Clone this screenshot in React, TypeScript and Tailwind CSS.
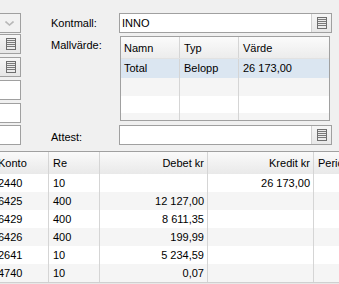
import React from "react";

const ListIcon = () => (
  <svg width="10" height="12" viewBox="0 0 10 12" className="block">
    <rect x="0.5" y="0.5" width="9" height="11" fill="#ececec" stroke="#6f6f6f" />
    <line x1="1" y1="2.5" x2="9" y2="2.5" stroke="#7a7a7a" />
    <line x1="1" y1="4.5" x2="9" y2="4.5" stroke="#7a7a7a" />
    <line x1="1" y1="6.5" x2="9" y2="6.5" stroke="#7a7a7a" />
    <line x1="1" y1="8.5" x2="9" y2="8.5" stroke="#7a7a7a" />
  </svg>
);

const Chevron = () => (
  <svg width="9" height="5" viewBox="0 0 9 5" className="block">
    <path d="M0.5 0.5 L4.5 4 L8.5 0.5" fill="none" stroke="#b8b8b8" strokeWidth="1.6" />
  </svg>
);

const LookupBox = ({ text }: { text: string }) => (
  <div className="w-[213px] h-[20px] border border-[#a0a0a0] bg-white flex">
    <div className="flex-1 pl-[2px] leading-[18px] whitespace-nowrap overflow-hidden">{text}</div>
    <div className="w-[20px] h-full border-l border-[#d0d0d0] bg-linear-to-b from-[#f6f6f6] to-[#e8e8e8] flex items-center justify-center">
      <ListIcon />
    </div>
  </div>
);

const bottomRows = [
  ["2440", "10", "", "26 173,00"],
  ["6425", "400", "12 127,00", ""],
  ["6429", "400", "8 611,35", ""],
  ["6426", "400", "199,99", ""],
  ["2641", "10", "5 234,59", ""],
  ["4740", "10", "0,07", ""],
];

export default function App() {
  return (
    <div
      className="w-[339px] h-[284px] bg-[#f0f0f0] overflow-hidden flex flex-col text-[11px] text-black"
      style={{ fontFamily: "'Liberation Sans', Arial, sans-serif" }}
    >
      {/* top form */}
      <div className="h-[151px] flex shrink-0">
        {/* left clipped column */}
        <div className="w-[21px] shrink-0 flex flex-col pt-[13px]">
          <div className="w-[40px] h-[20px] ml-[-19px] border border-[#a0a0a0] bg-[#f2f2f2] flex items-center justify-end pr-[6px]">
            <Chevron />
          </div>
          <div className="w-[40px] h-[20px] ml-[-19px] mt-[1px] border border-[#a0a0a0] bg-linear-to-b from-[#f6f6f6] to-[#e6e6e6] flex items-center justify-end pr-[4px]">
            <ListIcon />
          </div>
          <div className="w-[40px] h-[20px] ml-[-19px] mt-[3px] border border-[#a0a0a0] bg-linear-to-b from-[#f6f6f6] to-[#e6e6e6] flex items-center justify-end pr-[4px]">
            <ListIcon />
          </div>
          <div className="w-[40px] h-[20px] ml-[-19px] mt-[3px] border border-[#a0a0a0] bg-white" />
          <div className="w-[40px] h-[20px] ml-[-19px] mt-[3px] border border-[#a0a0a0] bg-white" />
          <div className="w-[40px] h-[20px] ml-[-19px] mt-[2px] border border-[#a0a0a0] bg-white" />
        </div>
        {/* labels */}
        <div className="w-[98px] shrink-0 pl-[30px] pt-[13px] flex flex-col">
          <div className="h-[20px] leading-[20px]">Kontmall:</div>
          <div className="h-[20px] leading-[20px] mt-[2px]">Mallvärde:</div>
          <div className="h-[20px] leading-[20px] mt-[72px]">Attest:</div>
        </div>
        {/* fields */}
        <div className="w-[213px] shrink-0 pt-[13px] flex flex-col">
          <LookupBox text="INNO" />
          <div className="ml-[1px] mt-[3px] w-[210px] h-[85px] border border-[#a0a0a0] bg-[#f5f5f5] flex flex-col overflow-hidden">
            <div className="h-[22px] shrink-0 flex bg-linear-to-b from-[#fbfbfb] to-[#ececec] border-b border-[#e2e2e2]">
              <div className="w-[59px] border-r border-[#d5d5d5] pl-[3px] leading-[22px]">Namn</div>
              <div className="w-[59px] border-r border-[#d5d5d5] pl-[4px] leading-[22px]">Typ</div>
              <div className="flex-1 pl-[4px] leading-[22px]">Värde</div>
            </div>
            <div className="h-[19px] shrink-0 flex bg-[#dbe6f1]">
              <div className="w-[59px] border-r border-[#d5d5d5] pl-[3px] leading-[19px]">Total</div>
              <div className="w-[59px] border-r border-[#d5d5d5] pl-[4px] leading-[19px]">Belopp</div>
              <div className="flex-1 pl-[4px] leading-[19px]">26 173,00</div>
            </div>
            <div className="h-[18px] shrink-0 flex bg-[#f5f5f5]">
              <div className="w-[59px] border-r border-[#d5d5d5]" />
              <div className="w-[59px] border-r border-[#d5d5d5]" />
              <div className="flex-1" />
            </div>
            <div className="h-[17px] shrink-0 flex bg-white">
              <div className="w-[59px] border-r border-[#d5d5d5]" />
              <div className="w-[59px] border-r border-[#d5d5d5]" />
              <div className="flex-1" />
            </div>
            <div className="flex-1 flex bg-[#f5f5f5]">
              <div className="w-[59px] border-r border-[#d5d5d5]" />
              <div className="w-[59px] border-r border-[#d5d5d5]" />
              <div className="flex-1" />
            </div>
          </div>
          <div className="mt-[4px]">
            <LookupBox text="" />
          </div>
        </div>
      </div>

      {/* bottom grid */}
      <div className="flex-1 flex flex-col ml-[-8px] w-[362px] border-t border-[#a0a0a0]">
        <div className="h-[22px] shrink-0 flex bg-linear-to-b from-[#fafafa] to-[#e9e9e9]">
          <div className="w-[57px] border-r border-[#d5d5d5] pl-[6px] leading-[22px]">Konto</div>
          <div className="w-[51px] border-r border-[#d5d5d5] pl-[4px] leading-[22px]">Re</div>
          <div className="w-[108px] border-r border-[#d5d5d5] pr-[3px] text-right leading-[22px]">Debet kr</div>
          <div className="w-[106px] border-r border-[#d5d5d5] pr-[3px] text-right leading-[22px]">Kredit kr</div>
          <div className="flex-1 pl-[4px] leading-[22px] whitespace-nowrap">Period</div>
        </div>
        {bottomRows.map((r, i) => (
          <div
            key={i}
            className={`h-[18px] shrink-0 flex ${i % 2 === 0 ? "bg-white" : "bg-[#f5f5f5]"}`}
          >
            <div className="w-[57px] border-r border-[#d5d5d5] pl-[6px] leading-[18px]">{r[0]}</div>
            <div className="w-[51px] border-r border-[#d5d5d5] pl-[4px] leading-[18px]">{r[1]}</div>
            <div className="w-[108px] border-r border-[#d5d5d5] pr-[3px] text-right leading-[18px]">{r[2]}</div>
            <div className="w-[106px] border-r border-[#d5d5d5] pr-[3px] text-right leading-[18px]">{r[3]}</div>
            <div className="flex-1" />
          </div>
        ))}
        <div className="flex-1 bg-[#e8e8e8] border-t border-[#d0d0d0]" />
      </div>
    </div>
  );
}
